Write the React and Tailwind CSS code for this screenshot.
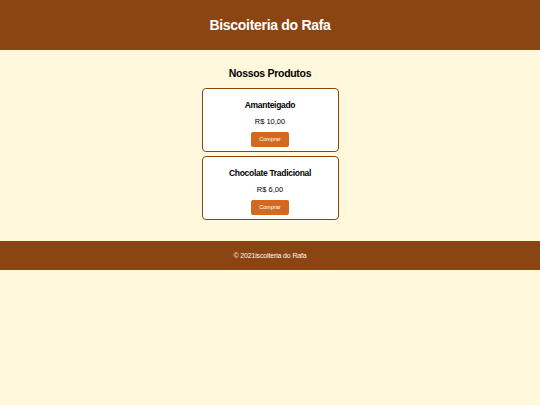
export default function App() {
  const produtos = [
    { nome: 'Amanteigado', preco: 'R$ 10,00' },
    { nome: 'Chocolate Tradicional', preco: 'R$ 6,00' },
  ];

  return (
    <div className="min-h-[405px] bg-[#fff8dc] font-['Liberation_Sans',Arial,sans-serif] text-black">
      <header className="h-[50px] bg-[#8b4513] flex items-center justify-center">
        <h1 className="text-[14px] font-bold text-white leading-none tracking-[-0.3px]">Biscoiteria do Rafa</h1>
      </header>

      <main className="pt-[16px] pb-[21px] flex flex-col items-center">
        <h2 className="text-[10.5px] font-bold leading-[14px] mb-[8px] tracking-[-0.3px]">Nossos Produtos</h2>
        <div className="flex flex-col gap-[4px]">
          {produtos.map((p) => (
            <div
              key={p.nome}
              className="w-[137px] h-[64px] bg-white border border-[#8b4513] rounded-[4px] flex flex-col items-center pt-[10px]"
            >
              <h3 className="text-[8.5px] font-bold leading-[12px] tracking-[-0.3px]">{p.nome}</h3>
              <p className="text-[7.5px] leading-[10px] mt-[6px]">{p.preco}</p>
              <button className="mt-[5px] w-[38px] h-[15px] bg-[#d2691e] text-white text-[5.5px] rounded-[2px]">
                Comprar
              </button>
            </div>
          ))}
        </div>
      </main>

      <footer className="h-[29px] bg-[#8b4513] flex items-center justify-center pt-[2px]">
        <p className="text-[7px] text-[#fff8ee] tracking-[-0.15px]">© 2021iscoiteria do Rafa</p>
      </footer>
    </div>
  );
}
